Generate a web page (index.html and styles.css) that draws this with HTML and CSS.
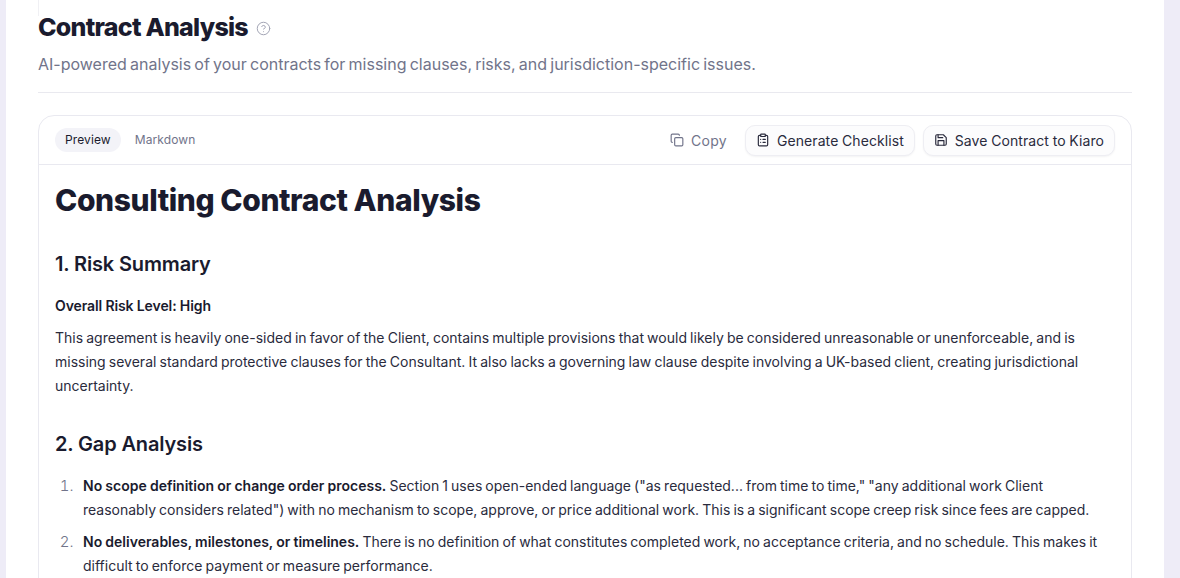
FILE: index.html
```html
<!DOCTYPE html>
<html lang="en">
<head>
<meta charset="utf-8">
<title>Contract Analysis</title>
<link rel="stylesheet" href="styles.css">
</head>
<body>
<main class="panel">
  <div class="top-stub"></div>
  <header class="head">
    <div class="title-row">
      <h1 class="title">Contract Analysis</h1>
      <svg class="help" viewBox="0 0 24 24" fill="none" stroke="currentColor" stroke-width="1.6" stroke-linecap="round" stroke-linejoin="round"><circle cx="12" cy="12" r="10"/><path d="M9.1 9a3 3 0 0 1 5.8 1c0 2-3 3-3 3"/><path d="M12 17h.01"/></svg>
    </div>
    <p class="sub">AI-powered analysis of your contracts for missing clauses, risks, and jurisdiction-specific issues.</p>
  </header>
  <section class="card">
    <div class="bar">
      <div class="tabs">
        <span class="tab tab-on">Preview</span>
        <span class="tab">Markdown</span>
      </div>
      <div class="actions">
        <span class="copy">
          <svg class="ic" viewBox="0 0 24 24" fill="none" stroke="currentColor" stroke-width="2" stroke-linecap="round" stroke-linejoin="round"><rect x="8" y="8" width="14" height="14" rx="2"/><path d="M4 16c-1.100 0-2-.9-2-2V4c0-1.100.9-2 2-2h10c1.100 0 2 .9 2 2"/></svg>
          Copy
        </span>
        <span class="btn">
          <svg class="ic" viewBox="0 0 24 24" fill="none" stroke="currentColor" stroke-width="2" stroke-linecap="round" stroke-linejoin="round"><rect x="8" y="2" width="8" height="4" rx="1"/><path d="M16 4h2a2 2 0 0 1 2 2v14a2 2 0 0 1-2 2H6a2 2 0 0 1-2-2V6a2 2 0 0 1 2-2h2"/><path d="M12 11h4M12 16h4M8 11h.01M8 16h.01"/></svg>
          Generate Checklist
        </span>
        <span class="btn">
          <svg class="ic" viewBox="0 0 24 24" fill="none" stroke="currentColor" stroke-width="2" stroke-linecap="round" stroke-linejoin="round"><path d="M19 21H5a2 2 0 0 1-2-2V5a2 2 0 0 1 2-2h11l5 5v11a2 2 0 0 1-2 2z"/><path d="M17 21v-8H7v8"/><path d="M7 3v5h8"/></svg>
          Save Contract to Kiaro
        </span>
      </div>
    </div>
    <article class="doc">
      <h2 class="h-main">Consulting Contract Analysis</h2>
      <h3 class="h-sec">1. Risk Summary</h3>
      <p class="para"><strong>Overall Risk Level: High</strong></p>
      <p class="para">This agreement is heavily one-sided in favor of the Client, contains multiple provisions that would likely be considered unreasonable or unenforceable, and is missing several standard protective clauses for the Consultant. It also lacks a governing law clause despite involving a UK-based client, creating jurisdictional uncertainty.</p>
      <h3 class="h-sec h-gap">2. Gap Analysis</h3>
      <ol class="list">
        <li><strong>No scope definition or change order process.</strong> Section 1 uses open-ended language ("as requested... from time to time," "any additional work Client reasonably considers related") with no mechanism to scope, approve, or price additional work. This is a significant scope creep risk since fees are capped.</li>
        <li><strong>No deliverables, milestones, or timelines.</strong> There is no definition of what constitutes completed work, no acceptance criteria, and no schedule. This makes it difficult to enforce payment or measure performance.</li>
      </ol>
    </article>
  </section>
</main>
</body>
</html>
```
FILE: styles.css
```css
* { box-sizing: border-box; }
html, body { margin: 0; height: 578px; overflow: hidden; }
body {
  background: #eeecf7;
  padding: 0 16px 0 6px;
  font-family: "Inter", "Liberation Sans", sans-serif;
  color: #1a1b2e;
}
.panel {
  position: relative;
  background: #fff;
  height: 578px;
  padding: 0 32px;
  overflow: hidden;
}
.top-stub {
  position: absolute;
  left: 32px;
  top: 0;
  width: 1px;
  height: 16px;
  background: #f0f0f4;
}
.head {
  padding-top: 11px;
  height: 93px;
  border-bottom: 1px solid #e9e9ef;
}
.title-row { display: flex; align-items: center; gap: 8px; height: 32px; }
.title { margin: 0; font-size: 25px; line-height: 32px; font-weight: 800; letter-spacing: -0.74px; }
.help { width: 15px; height: 15px; color: #a3a5b5; margin-top: 2px; }
.sub { margin: 9px 0 0; font-size: 16px; line-height: 24px; color: #71748a; letter-spacing: 0; word-spacing: -1.3px; }
.card {
  margin-top: 22px;
  width: 1094px;
  height: 500px;
  border: 1px solid #e9e9f0;
  border-radius: 16px;
}
.bar {
  height: 49px;
  border-bottom: 1px solid #e9e9f0;
  padding: 0 16px;
  display: flex;
  align-items: center;
  justify-content: space-between;
}
.tabs { display: flex; align-items: center; gap: 4px; }
.tab { font-size: 12px; line-height: 24px; padding: 0 10px; color: #71748a; border-radius: 12px; letter-spacing: 0.1px; }
.tab-on { background: #f3f3f8; color: #1a1b2e; }
.actions { display: flex; align-items: center; gap: 8px; font-size: 14px; }
.ic { width: 14px; height: 14px; flex: none; }
.copy { display: flex; align-items: center; gap: 7px; color: #71748a; margin-right: 10px; letter-spacing: 0.3px; }
.btn {
  display: flex;
  align-items: center;
  gap: 7px;
  height: 31px;
  padding: 0 10px;
  border: 1px solid #eeeef3;
  border-radius: 10px;
  background: #fcfcfd;
  box-shadow: 0 1px 2px rgba(26, 27, 46, .05);
  letter-spacing: 0.07px;
  word-spacing: -0.3px;
  color: #2a2b3d;
}
.doc { padding: 16px; }
.h-main { margin: 0; font-size: 30px; line-height: 38px; font-weight: 800; letter-spacing: -0.41px; }
.h-sec { margin: 31px 0 0; font-size: 20px; line-height: 28px; font-weight: 600; letter-spacing: -0.15px; }
.h-gap { margin-top: 32px; }
.para { margin: 8px 0 0; font-size: 14px; line-height: 24px; letter-spacing: 0; word-spacing: -0.78px; color: #2a2b3d; }
.para strong { font-weight: 600; color: #1a1b2e; letter-spacing: -0.1px; word-spacing: -0.1px; }
.h-sec + .para { margin-top: 16px; }
.list { margin: 16px 0 0; padding: 0 0 0 28px; font-size: 14px; line-height: 24px; letter-spacing: 0; word-spacing: -0.85px; color: #2a2b3d; }
.list li { margin-bottom: 8px; }
.list li::marker { content: counter(list-item) ".\00a0\00a0\00a0"; color: #71748a; font-size: 15px; font-weight: 300; }
.list strong { font-weight: 600; color: #1a1b2e; word-spacing: -0.35px; }
```
